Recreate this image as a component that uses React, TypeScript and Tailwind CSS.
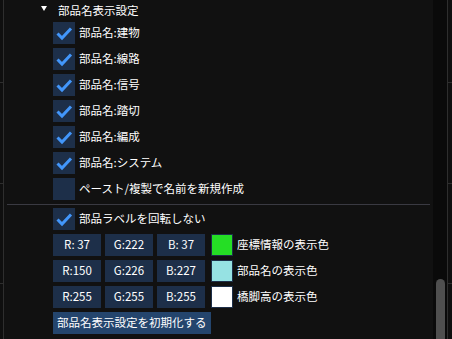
const checks = [
  { label: '部品名:建物', on: true },
  { label: '部品名:線路', on: true },
  { label: '部品名:信号', on: true },
  { label: '部品名:踏切', on: true },
  { label: '部品名:編成', on: true },
  { label: '部品名:システム', on: true },
  { label: 'ペースト/複製で名前を新規作成', on: false },
];

const colors = [
  { r: ' 37', g: '222', b: ' 37', swatch: 'bg-[#25de25]', label: '座標情報の表示色' },
  { r: '150', g: '226', b: '227', swatch: 'bg-[#96e2e3]', label: '部品名の表示色' },
  { r: '255', g: '255', b: '255', swatch: 'bg-[#ffffff]', label: '橋脚高の表示色' },
];

function CheckBox({ on }: { on: boolean }) {
  return (
    <div className="w-[22px] h-[22px] shrink-0 bg-[#1d2f49] flex items-center justify-center">
      {on && (
        <svg width="22" height="22" viewBox="0 0 22 22">
          <polyline
            points="4.5,11.5 9,16 18,6.5"
            fill="none"
            stroke="#4296fa"
            strokeWidth="3"
            strokeLinecap="butt"
            strokeLinejoin="miter"
          />
        </svg>
      )}
    </div>
  );
}

function Row({ label, on }: { label: string; on: boolean }) {
  return (
    <div className="flex items-center h-[22px] gap-[4px]">
      <CheckBox on={on} />
      <span className="whitespace-nowrap">{label}</span>
    </div>
  );
}

function Field({ text }: { text: string }) {
  return (
    <div className="w-[48px] h-[22px] bg-[#1d2f49] flex items-center justify-center whitespace-pre">
      {text}
    </div>
  );
}

export default function App() {
  return (
    <div
      className="w-[452px] h-[339px] bg-[#0f0f0f] flex overflow-hidden text-white text-[11.5px] leading-none"
      style={{ fontFamily: '"Noto Sans CJK JP", "Noto Sans", sans-serif' }}
    >
      {/* left neighbour strip */}
      <div className="w-[4px] shrink-0 border-r border-[#2e2e2e] flex flex-col">
        <div className="h-[82px]" />
        <div className="h-px bg-[#2e2e2e]" />
        <div className="h-[100px]" />
        <div className="h-px bg-[#2e2e2e]" />
        <div className="h-[99px]" />
        <div className="h-px bg-[#2e2e2e]" />
      </div>

      {/* main panel */}
      <div className="w-[429px] shrink-0 bg-[#111111] flex flex-col">
        <div className="flex items-center h-[22px] pl-[37px] gap-[11px]">
          <svg width="6" height="6" viewBox="0 0 6 6" className="mb-[4px]">
            <polygon points="0,0 6,0 3,5" fill="#ffffff" />
          </svg>
          <span className="mb-[1px]">部品名表示設定</span>
        </div>

        <div className="flex flex-col gap-[4px] pl-[49px]">
          {checks.map((c) => (
            <Row key={c.label} label={c.label} on={c.on} />
          ))}
        </div>

        <div className="h-px bg-[#3a3a42] ml-[3px] mr-[3px] mt-[4px] mb-[3px]" />

        <div className="flex flex-col gap-[4px] pl-[49px]">
          <Row label="部品ラベルを回転しない" on />
          {colors.map((c) => (
            <div key={c.label} className="flex items-center h-[22px]">
              <div className="flex gap-[4px]">
                <Field text={`R:${c.r}`} />
                <Field text={`G:${c.g}`} />
                <Field text={`B:${c.b}`} />
              </div>
              <div className={`w-[22px] h-[22px] ml-[6px] border border-[#1d2f49] ${c.swatch}`} />
              <span className="ml-[4px] whitespace-nowrap">{c.label}</span>
            </div>
          ))}
          <div className="flex">
            <div className="h-[22px] px-[4px] bg-[#24456d] flex items-center whitespace-nowrap">
              部品名表示設定を初期化する
            </div>
          </div>
        </div>
      </div>

      {/* scrollbar */}
      <div className="w-[14px] shrink-0 bg-[#0a0a0a] flex flex-col items-center pt-[279px]">
        <div className="w-[9px] flex-1 bg-[#4f4f4f] rounded-t-full" />
      </div>

      {/* right neighbour strip */}
      <div className="flex-1 border-l border-[#2e2e2e] bg-[#0f0f0f] flex flex-col">
        <div className="h-[82px]" />
        <div className="h-px bg-[#2e2e2e]" />
        <div className="h-[100px]" />
        <div className="h-px bg-[#2e2e2e]" />
        <div className="h-[99px]" />
        <div className="h-px bg-[#2e2e2e]" />
      </div>
    </div>
  );
}
